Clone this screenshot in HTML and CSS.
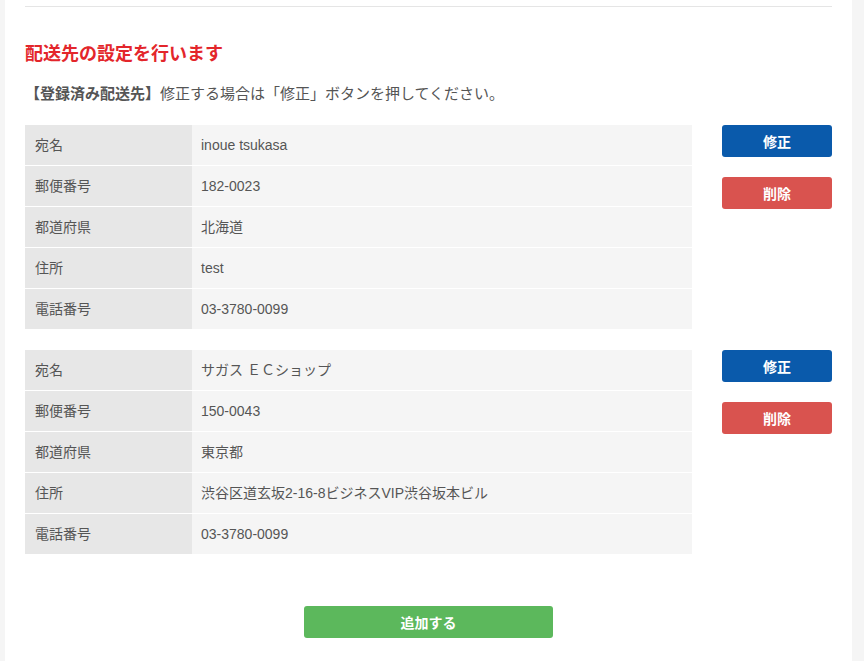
FILE: index.html
```html
<!DOCTYPE html>
<html lang="ja">
<head>
  <meta charset="UTF-8">
  <meta name="viewport" content="width=device-width, initial-scale=1.0">
  <title>配送先の設定</title>
  <link rel="stylesheet" href="styles.css">
</head>
<body>
  <div class="page">
    <div class="divider"></div>

    <h2 class="title">配送先の設定を行います</h2>
    <p class="lead"><strong>【登録済み配送先】</strong>修正する場合は「修正」ボタンを押してください。</p>

    <div class="address">
      <div class="address-table">
        <div class="label">宛名</div><div class="value">inoue tsukasa</div>
        <div class="label">郵便番号</div><div class="value">182-0023</div>
        <div class="label">都道府県</div><div class="value">北海道</div>
        <div class="label">住所</div><div class="value">test</div>
        <div class="label">電話番号</div><div class="value">03-3780-0099</div>
      </div>
      <div class="actions">
        <button type="button" class="btn btn-edit">修正</button>
        <button type="button" class="btn btn-delete">削除</button>
      </div>
    </div>

    <div class="address">
      <div class="address-table">
        <div class="label">宛名</div><div class="value">サガス ＥＣショップ</div>
        <div class="label">郵便番号</div><div class="value">150-0043</div>
        <div class="label">都道府県</div><div class="value">東京都</div>
        <div class="label">住所</div><div class="value">渋谷区道玄坂2-16-8ビジネスVIP渋谷坂本ビル</div>
        <div class="label">電話番号</div><div class="value">03-3780-0099</div>
      </div>
      <div class="actions">
        <button type="button" class="btn btn-edit">修正</button>
        <button type="button" class="btn btn-delete">削除</button>
      </div>
    </div>

    <div class="add-row">
      <button type="button" class="btn btn-add">追加する</button>
    </div>
  </div>
</body>
</html>
```

FILE: styles.css
```css
:root {
  --text: #555;
  --red: #e3262b;
  --blue: #0a5aab;
  --danger: #d9534f;
  --success: #5cb85c;
  --label-bg: #e7e7e7;
  --value-bg: #f5f5f5;
}

* {
  margin: 0;
  padding: 0;
  box-sizing: border-box;
}

body {
  font-family: 'Liberation Sans', 'Noto Sans CJK JP', sans-serif;
  background-color: #f5f5f5;
  color: var(--text);
  font-size: 14px;
  line-height: 20px;
}

.page {
  margin-left: 5px;
  width: 847px;
  min-height: 661px;
  background: white;
  padding: 6px 20px 40px;
}

.divider {
  border-top: 1px solid #e5e5e5;
}

.title {
  margin-top: 35px;
  font-size: 18px;
  line-height: 24px;
  font-weight: bold;
  color: var(--red);
}

.lead {
  margin-top: 18px;
  font-size: 15px;
}

.lead strong {
  font-weight: bold;
}

.address {
  display: flex;
  gap: 30px;
  margin-top: 21px;
}

.address-table {
  width: 667px;
  display: grid;
  grid-template-columns: 167px 1fr;
  grid-auto-rows: 40px;
  row-gap: 1px;
}

.label,
.value {
  display: flex;
  align-items: center;
  padding: 0 10px;
}

.label {
  background: var(--label-bg);
}

.value {
  background: var(--value-bg);
  padding-left: 9px;
}

.actions {
  width: 110px;
  display: flex;
  flex-direction: column;
  gap: 20px;
}

.btn {
  height: 32px;
  border: none;
  border-radius: 3px;
  color: white;
  font-family: inherit;
  font-size: 14px;
  font-weight: bold;
  cursor: pointer;
}

.btn-edit {
  background: var(--blue);
}

.btn-delete {
  background: var(--danger);
}

.add-row {
  display: flex;
  justify-content: center;
  margin-top: 52px;
}

.btn-add {
  width: 249px;
  background: var(--success);
}
```
